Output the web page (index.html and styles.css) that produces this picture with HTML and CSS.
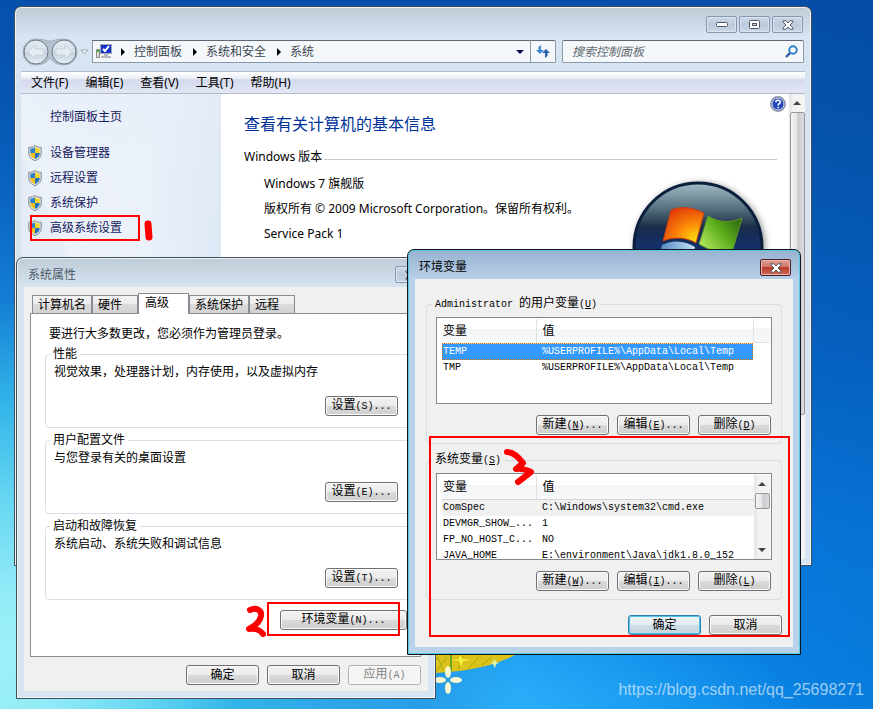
FILE: index.html
```html
<!DOCTYPE html>
<html lang="zh-CN">
<head>
<meta charset="utf-8">
<title>系统 - 环境变量</title>
<link rel="stylesheet" href="styles.css">
</head>
<body>
<svg class="defs" width="0" height="0" aria-hidden="true">
  <defs>
    <linearGradient id="orb" x1="0" y1="0" x2="0" y2="1">
      <stop offset="0" stop-color="#a3bcc6"/><stop offset=".2" stop-color="#55707f"/><stop offset=".34" stop-color="#1c2f48"/><stop offset=".42" stop-color="#152c5c"/><stop offset=".6" stop-color="#14357a"/><stop offset="1" stop-color="#2f86c8"/>
    </linearGradient>
    <radialGradient id="flagRed" cx=".8" cy=".9" r="1"><stop offset="0" stop-color="#f8e010"/><stop offset=".45" stop-color="#fc8a08"/><stop offset="1" stop-color="#e03a08"/></radialGradient>
    <linearGradient id="flagGreen" x1="0" y1=".8" x2="1" y2=".1"><stop offset="0" stop-color="#b4e860"/><stop offset=".5" stop-color="#5eb01c"/><stop offset="1" stop-color="#2a6410"/></linearGradient>
    <linearGradient id="flagBlue" x1="0" y1="0" x2="1" y2="0"><stop offset="0" stop-color="#3f78ba"/><stop offset="1" stop-color="#c4e2f4"/></linearGradient>
    <linearGradient id="nav" x1="0" y1="0" x2="0" y2="1"><stop offset="0" stop-color="#e4eaf0"/><stop offset=".48" stop-color="#d7e0e9"/><stop offset=".52" stop-color="#c4d0dc"/><stop offset="1" stop-color="#e8f0f6"/></linearGradient>
    <symbol id="shield" viewBox="0 0 14 16">
      <path d="M7 .5 C5.5 1.8 3 2.4 .8 2.4 V8 C.8 12 3.5 14.3 7 15.6 C10.5 14.3 13.2 12 13.2 8 V2.4 C11 2.4 8.500 1.800 7 .5Z" fill="#dfe4e6" stroke="#7d8b91"/>
      <path d="M7 2.200V8H2.300V3.700C4.300 3.600 6 3 7 2.200Z" fill="#2e80c8"/>
      <path d="M7 2.200V8H11.700V3.700C9.700 3.600 8 3 7 2.200Z" fill="#fbd428"/>
      <path d="M2.300 8H7V14C4.300 12.900 2.300 11.200 2.300 8Z" fill="#f4bd18"/>
      <path d="M11.700 8H7V14C9.700 12.900 11.700 11.200 11.700 8Z" fill="#2470bc"/>
    </symbol>
    <symbol id="closeGlyph" viewBox="0 0 12 10">
      <path d="M1 .8H4L6 3 8 .8H11V2L8 5 11 8V9.200H8L6 7 4 9.200H1V8L4 5 1 2Z" fill="#fff" stroke="#505768"/>
    </symbol>
    <symbol id="arrowUp" viewBox="0 0 8 4"><path d="M0 4 4 0 8 4Z" fill="#454545"/></symbol>
    <symbol id="arrowDown" viewBox="0 0 8 4"><path d="M0 0H8L4 4Z" fill="#454545"/></symbol>
  </defs>
</svg>

<main class="desktop">
  <svg class="flower" width="90" height="56" viewBox="0 0 90 56" aria-hidden="true">
    <path d="M0 0H88C70 10 40 17 8 18H0Z" fill="#dcc31c"/>
    <path d="M8 18 20 2M16 15 11 2M31 15 36 1M40 15 52 2M55 10 65 2M3 13 11 2" stroke="#a8a810" stroke-width="1"/>
    <path d="M24 0V17" stroke="#6fa81c" stroke-width="2"/>
    <path d="M33 0 36 4 45 5 36 6 34 12 32 6 24 5 32 4Z" fill="#f6f23c"/>
    <path d="M68 4 69 7 72 8 69 9 68 13 66 9 63 8 66 7Z" fill="#dff3a4"/>
    <g fill="#fbf8cf"><ellipse cx="21" cy="17" rx="3" ry="6"/><ellipse cx="21" cy="33" rx="3" ry="6"/><ellipse cx="13" cy="25" rx="6" ry="3"/><ellipse cx="29" cy="25" rx="6" ry="3"/></g>
  </svg>

  <section class="window system" aria-label="系统">
    <header class="caption-row">
      <button class="caption" aria-label="最小化"><svg width="12" height="6"><rect x=".5" y=".5" width="11" height="4" rx="1" fill="#fff" stroke="#505768"/></svg></button>
      <button class="caption" aria-label="最大化"><svg width="12" height="10"><rect x=".5" y=".5" width="10" height="8" rx="1" fill="#fff" stroke="#505768"/><rect x="3.500" y="3.500" width="4" height="2" fill="#c8d4e2" stroke="#505768"/></svg></button>
      <button class="caption" aria-label="关闭"><svg width="12" height="10"><use href="#closeGlyph"/></svg></button>
    </header>

    <div class="address-row">
      <svg class="nav" width="70" height="28" viewBox="0 0 70 28" role="img" aria-label="后退 前进">
        <path d="M14 1C22 1 24 3 28 3S34 1 42 1A13 13 0 0 1 42 27C35 27 31 24 28 20 25 24 21 27 14 27A13 13 0 0 1 14 1Z" fill="#b3c1cf" stroke="#a3b1bf"/>
        <circle cx="14" cy="14" r="12" fill="url(#nav)" stroke="#6c7a89"/>
        <circle cx="42" cy="14" r="12" fill="url(#nav)" stroke="#6c7a89"/>
        <path d="M6 14 13 7V11H22V17H13V21Z" fill="#e6ecf2" stroke="#c8d2dc"/>
        <path d="M50 14 43 7V11H34V17H43V21Z" fill="#e6ecf2" stroke="#c8d2dc"/>
        <path d="M59 12H66L62.500 16Z" fill="#f4f8fb" stroke="#9aa8b6"/>
      </svg>
      <nav class="address" aria-label="地址">
        <svg class="pc" width="17" height="15" viewBox="0 0 17 15" aria-hidden="true"><path d="M.5 5.500H3.500V13.500H.5Z" fill="#d8dcd4" stroke="#888"/><path d="M2 6V8" stroke="#2ec02e" stroke-width="2"/><rect x="4.500" y=".5" width="11" height="9" fill="#1734c8" stroke="#a2a8b0"/><path d="M7 5 9 7 13 2" fill="none" stroke="#fff" stroke-width="2"/><path d="M8 10H12V12H15V14H5V12H8Z" fill="#b4bac0"/></svg>
        <svg class="sep" width="4" height="8"><path d="M0 0 4 4 0 8Z"/></svg><a href="#">控制面板</a>
        <svg class="sep" width="4" height="8"><path d="M0 0 4 4 0 8Z"/></svg><a href="#">系统和安全</a>
        <svg class="sep" width="4" height="8"><path d="M0 0 4 4 0 8Z"/></svg><a href="#">系统</a>
        <svg class="drop" width="8" height="4"><path d="M0 0H8L4 4Z" fill="#0a0a50"/></svg>
      </nav>
      <button class="refresh" aria-label="刷新"><svg width="14" height="13" viewBox="0 0 14 13"><path d="M5 0 2.500 2V5H0L4 9 8 5H5V3Z" fill="#3a8ad0"/><path d="M9 13 11.500 11V8H14L10 4 6 8H9V10Z" fill="#2a62ae"/></svg></button>
      <div class="search">
        <input type="text" placeholder="搜索控制面板" aria-label="搜索控制面板">
        <svg width="13" height="13" viewBox="0 0 13 13" aria-hidden="true"><circle cx="8" cy="5" r="3.700" fill="#fff" stroke="#2f7fc4" stroke-width="2"/><path d="M5 8 1 12" stroke="#2a5aa4" stroke-width="2.400"/></svg>
      </div>
    </div>

    <nav class="menu" aria-label="菜单"><a href="#">文件(F)</a><a href="#">编辑(E)</a><a href="#">查看(V)</a><a href="#">工具(T)</a><a href="#">帮助(H)</a></nav>

    <div class="content">
      <aside class="sidebar">
        <a class="home" href="#">控制面板主页</a>
        <a href="#"><svg width="14" height="16"><use href="#shield"/></svg>设备管理器</a>
        <a href="#"><svg width="14" height="16"><use href="#shield"/></svg>远程设置</a>
        <a href="#"><svg width="14" height="16"><use href="#shield"/></svg>系统保护</a>
        <a href="#"><svg width="14" height="16"><use href="#shield"/></svg>高级系统设置</a>
        <span class="mark mark-link"></span>
        <svg class="ink ink-first" width="12" height="26" viewBox="0 0 12 26" aria-hidden="true"><path d="M6 7 7 20" stroke-width="7"/></svg>
      </aside>
      <article class="info">
        <svg class="help" width="16" height="16" viewBox="0 0 16 16" role="img" aria-label="帮助"><circle cx="8" cy="8" r="7.200" fill="#2446b8" stroke="#8c94a4" stroke-width="1.500"/><circle cx="8" cy="8" r="6" fill="none" stroke="#d7def0"/><path d="M5.800 6.300C5.800 3.500 10.300 3.600 10.200 6.200 10.200 7.700 8.200 7.700 8.200 9.400M8.200 10.700V12.200" fill="none" stroke="#fff" stroke-width="1.600"/></svg>
        <h1>查看有关计算机的基本信息</h1>
        <h2>Windows 版本</h2>
        <div class="edition">
          <div><p>Windows 7 旗舰版</p><p>版权所有 © 2009 Microsoft Corporation。保留所有权利。</p><p>Service Pack 1</p></div>
          <svg class="logo" width="132" height="132" viewBox="0 0 132 132" role="img" aria-label="Windows">
            <circle cx="66" cy="66" r="64" fill="url(#orb)" stroke="#0b1e3c" stroke-width="3"/>
            <path d="M39 29C49 25 60 26 72 32L64 62C55 57 43 55 31 60Z" fill="url(#flagRed)" stroke="#c83c10"/>
            <path d="M76 35C88 42 99 42 110 37L101 68C90 73 78 70 67 63Z" fill="url(#flagGreen)" stroke="#63962c"/>
            <path d="M30 64C42 58 54 60 63 66L55 95C45 89 34 89 22 94Z" fill="url(#flagBlue)"/>
            <path d="M66 68C78 75 90 76 100 72L92 101C80 105 69 103 58 97Z" fill="#f6c62a"/>
          </svg>
        </div>
      </article>
      <div class="scroll main-scroll" aria-hidden="true"><svg width="8" height="4"><use href="#arrowUp"/></svg><span class="thumb"></span></div>
    </div>
  </section>

  <section class="window properties" aria-label="系统属性">
    <header class="titlebar"><span>系统属性</span><button class="caption" aria-label="关闭"><svg width="12" height="10"><use href="#closeGlyph"/></svg></button></header>
    <div class="client">
      <div class="tabs" role="tablist">
        <button role="tab">计算机名</button><button role="tab" class="hardware">硬件</button><button role="tab" class="active" aria-selected="true">高级</button><button role="tab">系统保护</button><button role="tab" class="remote">远程</button>
      </div>
      <div class="pane">
        <p class="notice">要进行大多数更改，您必须作为管理员登录。</p>
        <fieldset><legend>性能</legend><p>视觉效果，处理器计划，内存使用，以及虚拟内存</p><button class="btn">设置<span>(S)...</span></button></fieldset>
        <fieldset><legend>用户配置文件</legend><p>与您登录有关的桌面设置</p><button class="btn">设置<span>(E)...</span></button></fieldset>
        <fieldset><legend>启动和故障恢复</legend><p>系统启动、系统失败和调试信息</p><button class="btn">设置<span>(T)...</span></button></fieldset>
        <div class="variables"><button class="btn wide">环境变量<span>(N)...</span></button>
          <span class="mark mark-button"></span>
          <svg class="ink ink-second" width="24" height="36" viewBox="0 0 24 36" aria-hidden="true"><path d="M7 7C13 4 19 7 18 13 17 18 12 23 6 26 13 25 18 28 20 31" stroke-width="6"/></svg>
        </div>
      </div>
      <footer class="actions"><button class="btn">确定</button><button class="btn">取消</button><button class="btn" disabled>应用<span>(A)</span></button></footer>
    </div>
  </section>

  <section class="window environment" aria-label="环境变量">
    <header class="titlebar"><span>环境变量</span><button class="caption close" aria-label="关闭"><svg width="12" height="10"><use href="#closeGlyph"/></svg></button></header>
    <div class="client">
      <fieldset>
        <legend><span>Administrator </span>的用户变量<span>(<u>U</u>)</span></legend>
        <div class="list">
          <table>
            <thead><tr><th class="name">变量</th><th>值</th></tr></thead>
            <tbody><tr class="selected"><td>TEMP</td><td>%USERPROFILE%\AppData\Local\Temp</td></tr><tr><td>TMP</td><td>%USERPROFILE%\AppData\Local\Temp</td></tr></tbody>
          </table>
          <div class="list-end"></div>
        </div>
        <div class="row"><button class="btn">新建<span>(<u>N</u>)...</span></button><button class="btn">编辑<span>(<u>E</u>)...</span></button><button class="btn">删除<span>(<u>D</u>)</span></button></div>
      </fieldset>
      <fieldset>
        <legend>系统变量<span>(<u>S</u>)</span></legend>
        <div class="list">
          <table>
            <thead><tr><th class="name">变量</th><th>值</th></tr></thead>
            <tbody><tr class="current"><td>ComSpec</td><td>C:\Windows\system32\cmd.exe</td></tr><tr><td>DEVMGR_SHOW_...</td><td>1</td></tr><tr><td>FP_NO_HOST_C...</td><td>NO</td></tr><tr><td>JAVA_HOME</td><td>E:\environment\Java\jdk1.8.0_152</td></tr></tbody>
          </table>
          <div class="scroll" aria-hidden="true"><svg width="8" height="4"><use href="#arrowUp"/></svg><span class="thumb"></span><svg class="down" width="8" height="4"><use href="#arrowDown"/></svg></div>
        </div>
        <div class="row"><button class="btn">新建<span>(<u>W</u>)...</span></button><button class="btn">编辑<span>(<u>I</u>)...</span></button><button class="btn">删除<span>(<u>L</u>)</span></button></div>
      </fieldset>
      <footer class="actions"><button class="btn default">确定</button><button class="btn">取消</button></footer>
      <span class="mark mark-group"></span>
      <svg class="ink ink-third" width="36" height="42" viewBox="0 0 36 42" aria-hidden="true"><path d="M5 5C12 5 17 11 21 16L14 22C19 21 25 23 29 25L16 35" stroke-width="6"/></svg>
    </div>
  </section>

  <p class="watermark">https://blog.csdn.net/qq_25698271</p>
</main>
</body>
</html>
```

FILE: styles.css
```css
* { box-sizing: border-box; }
body, h1, h2, p, fieldset, legend { margin: 0; padding: 0; font-weight: 400; }
body {
  --mono: "Liberation Mono", "Noto Sans CJK SC", monospace;
  font: 12px/16px "Noto Sans", "Noto Sans CJK SC", sans-serif;
  color: #000;
}
button, input { font: inherit; color: inherit; margin: 0; padding: 0; }
a { color: inherit; text-decoration: none; }
svg { display: block; flex: none; }
.defs { position: absolute; }

.desktop {
  position: relative;
  min-height: 100vh;
  overflow: hidden;
  background:
    radial-gradient(ellipse 520px 560px at 0 660px, #9ef0f8 0, #92ebf7 12%, #66d6f2 29%, #32b4e8 46%, #1f90dd99 64%, #1272cc66 82%, #0650ac00 100%),
    radial-gradient(ellipse 560px 200px at 260px 740px, #5cdcfb 0, #30b4fa 40%, #109cf000 100%),
    linear-gradient(100deg, transparent 55%, #00327430 100%),
    linear-gradient(#0650ac 0, #0558b4 20%, #0668cc 50%, #0880e8 75%, #0a90f6 100%);
}
.flower { position: absolute; left: 427px; top: 655px; }
.watermark { position: absolute; right: 9px; bottom: 10px; font: 16px/18px "Liberation Sans", sans-serif; color: #ffffff99; }

.window {
  position: absolute;
  display: flex;
  flex-direction: column;
  border: 1px solid #444c56;
  border-radius: 7px 7px 0 0;
  background: linear-gradient(#bfccd8, #d7e4f1 30px);
  box-shadow: inset 0 0 0 1px #edf4fa;
}
.caption {
  display: grid;
  place-items: center;
  width: 31px;
  height: 17px;
  border: 1px solid #8797b2;
  border-radius: 2px;
  background: linear-gradient(#cbd7e5, #bccbdc 50%, #c8d6e6);
  box-shadow: inset 0 0 0 1px #d9e4ef;
}
.client { background: #f0f0f0; flex: 1; margin: 0 7px 7px; position: relative; display: flex; flex-direction: column; }
.titlebar { height: 29px; display: flex; justify-content: space-between; align-items: flex-start; padding: 9px 9px 0 11px; }

/* System window */
.system { left: 14px; right: 61px; top: 6px; height: 560px; }
.caption-row { height: 33px; display: flex; justify-content: flex-end; gap: 2px; padding: 9px 8px 0 0; }
.address-row { height: 23px; display: flex; align-items: center; padding: 0 7px; margin-bottom: 8px; color: #3c4650; }
.address, .refresh, .search { height: 23px; border: 1px solid #8d99a5; border-top-color: #5f6873; background: #f4f8fb; }
.address { flex: 434 1 0; display: flex; align-items: center; padding-left: 3px; min-width: 0; white-space: nowrap; }
.sep { margin: 0 9px 0 8px; }
.address a { margin-right: 3px; }
.drop { margin: 0 6px 0 auto; }
.refresh { width: 26px; margin-left: -1px; display: grid; place-items: center; border-radius: 0 2px 2px 0; }
.search { flex: 226 1 0; display: flex; align-items: center; margin-left: 6px; padding: 0 5px 0 9px; min-width: 0; border-radius: 2px; }
.search input { flex: 1; min-width: 0; border: 0; background: none; font-style: italic; outline: 0; }
.search input::placeholder { color: #626a70; opacity: 1; }
.menu {
  height: 23px;
  margin: 0 6px;
  display: flex;
  align-items: center;
  gap: 17px;
  padding-left: 10px;
  border: solid #b3bac8;
  border-width: 1px 0;
  background: linear-gradient(#fff, #e8ecf4 34%, #d4daed 36%, #e2e7f5);
}
.content { flex: 1; min-height: 0; margin: 0 6px 6px; display: grid; grid-template-columns: 200px 1fr 16px; background: #fff; }
.sidebar {
  position: relative;
  padding: 10px 0 0 7px;
  color: #16215e;
  background: linear-gradient(65deg, transparent 45%, #f3f7fc80 46%, transparent 80%), linear-gradient(100deg, #e4ebf7, #eaf0f9 50%, #d7e3f4);
}
.sidebar a { display: flex; align-items: center; gap: 8px; height: 25px; }
.sidebar .home { padding-left: 22px; margin-bottom: 11px; }
.info { position: relative; padding: 19px 12px 0 23px; min-width: 0; }
.help { position: absolute; right: 3px; top: 2px; }
h1 { font-size: 16px; line-height: 22px; color: #003399; }
h2 { display: flex; align-items: center; gap: 2px; font-size: 12px; line-height: 16px; margin: 14px 0 6px; }
h2::after { content: ""; flex: 1; height: 1px; margin-top: 4px; background: #c9c9cc; }
.edition { display: flex; justify-content: space-between; padding-left: 20px; }
.edition p { line-height: 25px; white-space: nowrap; }
.logo { margin: 10px 13px 0 0; filter: drop-shadow(2px 1px 3px #0006); }
.scroll { display: flex; flex-direction: column; align-items: center; width: 16px; background: linear-gradient(90deg, #e4e4e4, #f2f2f2 30%, #f4f4f4); }
.scroll svg { margin: 7px 0; }
.thumb { width: 15px; border: 1px solid #979797; border-radius: 2px; background: linear-gradient(90deg, #f5f5f5, #e4e4e6 48%, #c9c9ce 52%, #dcdce0); }
.main-scroll .thumb { height: 303px; }

/* Shared dialog controls */
.btn {
  width: 73px;
  height: 20px;
  line-height: 16px;
  text-align: center;
  white-space: nowrap;
  border: 1px solid #707070;
  border-radius: 3px;
  background: linear-gradient(#f3f3f3, #ebebeb 49%, #dadada 50%, #cfcfcf);
  box-shadow: inset 0 0 0 1px #fbfbfb;
}
.btn:disabled { color: #838383; border-color: #adb2b5; background: #f4f4f4; }
.btn.default { border-color: #2f7faa; background: linear-gradient(#eef4f7, #e3ecf1 49%, #cfdde5 50%, #c4d5de); box-shadow: inset 0 0 0 1px #4fc4ea; }
.btn span, legend span, td { font-family: var(--mono); font-size: 10px; }
.actions { display: flex; justify-content: flex-end; gap: 8px; }
fieldset { border: 1px solid #d5dfe5; border-radius: 4px; min-width: 0; }
legend { line-height: 12px; padding: 0 3px; margin-left: -4px; white-space: pre; }

/* System properties */
.properties { left: 16px; top: 257px; width: 420px; height: 442px; }
.properties .titlebar { color: #4c5a68; }
.properties .caption { margin-top: -1px; }
.properties .client { padding: 6px 7px 0 6px; }
.tabs { display: flex; align-items: flex-end; padding-left: 2px; height: 20px; }
.tabs button { height: 18px; padding: 0 5px; line-height: 16px; border: 1px solid #898c95; border-bottom: 0; background: linear-gradient(#f3f3f3, #ebebeb 49%, #dcdcdc 50%, #d2d2d2); white-space: nowrap; }
.tabs .hardware { padding-right: 15px; }
.tabs .remote { padding-right: 15px; }
.tabs .active { height: 21px; padding: 0 19px 2px 6px; margin-bottom: -1px; background: #fff; position: relative; }
.pane { height: 344px; border: 1px solid #898c95; background: #fff; padding: 12px 6px 0 14px; display: flex; flex-direction: column; }
.notice { padding-left: 4px; line-height: 16px; margin-bottom: 6px; }
.pane fieldset { height: 80px; margin-bottom: 6px; padding: 4px 15px 0 8px; }
.pane fieldset .btn { display: block; margin: 16px 0 0 auto; }
.variables { position: relative; display: flex; justify-content: flex-end; padding: 4px 7px 0 0; }
.btn.wide { width: 127px; }
.properties .actions { margin-top: 8px; }

/* Environment variables */
.environment {
  left: 407px;
  top: 249px;
  width: 394px;
  height: 406px;
  border-color: #10151c;
  background: linear-gradient(#98b3d0, #b9d0e9 30px, #bad1ea);
  box-shadow: inset 0 0 0 1px #55cbe0;
}
.caption.close { border-color: #4a1e28; background: linear-gradient(#dda095, #cf7468 48%, #b93a27 50%, #cf6a55); box-shadow: inset 0 0 0 1px #e9b5ac; }
.environment .client { padding: 18px 11px 0; }
.environment fieldset { height: 147px; margin-bottom: 9px; padding: 6px 9px 0; }
.list { height: 87px; display: flex; border: 1px solid #828790; background: #fff; overflow: hidden; padding: 1px 1px 0 5px; }
.list table { flex: 1; border-collapse: collapse; table-layout: fixed; align-self: flex-start; width: 100%; }
th { height: 24px; padding: 0 1px; text-align: left; font-weight: 400; border-bottom: 1px solid #d5d5d5; background: linear-gradient(#fff 40%, #f3f4f6 41%, #f7f8fa); }
th + th { padding-left: 6px; border-left: 1px solid #dfe1e5; }
.name { width: 94px; }
td { height: 16px; line-height: 16px; padding: 0 0 0 1px; white-space: nowrap; }
td + td { padding-left: 6px; }
.selected { background: #3399ff; color: #fff; outline: 1px dotted #e07000; outline-offset: -1px; }
.current { background: #f0f0f0; }
.list-end { width: 17px; height: 24px; border: solid #dfe1e5; border-width: 0 0 1px 1px; background: linear-gradient(#fff 40%, #f3f4f6 41%, #f7f8fa); }
.list .thumb { height: 16px; }
.list .scroll .down { margin-top: auto; }
.row { display: flex; justify-content: flex-end; gap: 8px; margin-top: 11px; padding-right: 1px; }
.environment .actions { margin-top: 6px; }

/* Ink marks */
.mark { position: absolute; border: 2px solid red; pointer-events: none; }
.ink { position: absolute; fill: none; stroke: red; stroke-linecap: round; stroke-linejoin: round; }
.mark-link { left: 9px; top: 121px; width: 110px; height: 26px; }
.ink-first { left: 121px; top: 123px; }
.mark-button { right: 14px; top: -4px; width: 133px; height: 34px; }
.ink-second { right: 147px; top: -3px; }
.mark-group { left: 14px; right: 3px; top: 157px; bottom: 10px; }
.ink-third { left: 87px; top: 168px; }
```
